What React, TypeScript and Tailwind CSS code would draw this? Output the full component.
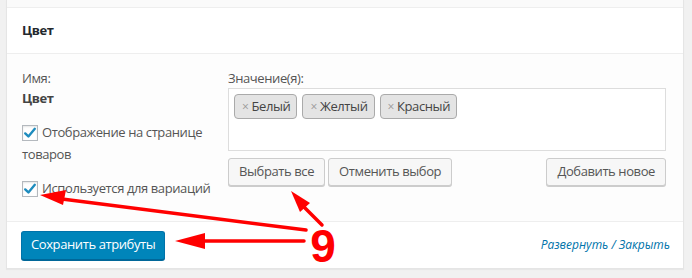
import React from "react";

const font = { fontFamily: '"Open Sans", "Noto Sans", Arial, sans-serif' };

function Check() {
  return (
    <span className="inline-flex h-[16px] w-[16px] shrink-0 items-center justify-center border border-[#b4b9be] bg-white shadow-[inset_0_1px_2px_rgba(0,0,0,0.1)]">
      <svg width="14" height="14" viewBox="0 0 14 14">
        <path d="M2.2 7.4 L5.4 10.4 L11.8 2.8" fill="none" stroke="#1e8cbe" strokeWidth="2.4" strokeLinecap="round" strokeLinejoin="round" />
      </svg>
    </span>
  );
}

function Tag({ label }: { label: string }) {
  return (
    <span className="inline-flex h-[25px] items-center rounded-[4px] border border-[#aaa] bg-[#e4e4e4] pl-[7px] pr-[6px] text-[13px] text-[#444]">
      <span className="mr-[3px] text-[12px] text-[#999]">×</span>
      {label}
    </span>
  );
}

function Btn({ children }: { children: React.ReactNode }) {
  return (
    <button className="h-[28px] rounded-[3px] border border-[#ccc] bg-[#f7f7f7] px-[10px] text-[13px] tracking-[-0.4px] text-[#555] shadow-[0_1px_0_#ccc]">
      {children}
    </button>
  );
}

export default function App() {
  return (
    <div className="relative h-[278px] w-[692px] overflow-hidden bg-[#f1f1f1] pl-[6px] pr-[8px] tracking-[-0.4px]" style={font}>
      <div className="flex h-[269px] flex-col border-x border-b border-[#e5e5e5] bg-white shadow-[0_1px_1px_rgba(0,0,0,0.04)]">
        <div className="h-[8px] border-b border-[#eee] bg-[#fafafa]" />
        <div className="flex h-[46px] items-center border-b border-[#eee] bg-white px-[15px] text-[13px] font-bold text-[#23282d]">
          Цвет
        </div>
        <div className="flex h-[168px] border-b border-[#eee] bg-[#fdfdfd] pl-[15px] pr-[17px] pt-[15px] text-[13px] text-[#555]">
          <div className="w-[206px]">
            <div className="leading-[18px]">Имя:</div>
            <div className="mt-[2px] font-bold leading-[18px] text-[#444]">Цвет</div>
            <div className="mt-[14px] flex items-start leading-[22px]">
              <div>
                <span className="mr-[4px] inline-flex align-[-3px]"><Check /></span>
                Отображение на странице товаров
              </div>
            </div>
            <div className="mt-[12px] leading-[22px]">
              <span className="mr-[4px] inline-flex align-[-3px]"><Check /></span>
              Используется для вариаций
            </div>
          </div>
          <div className="flex flex-1 flex-col">
            <div className="leading-[18px]">Значение(я):</div>
            <div className="mt-[1px] flex h-[63px] items-start gap-[5px] border border-[#ddd] bg-white p-[5px]">
              <Tag label="Белый" />
              <Tag label="Желтый" />
              <Tag label="Красный" />
            </div>
            <div className="mt-[7px] flex gap-[3px]">
              <Btn>Выбрать все</Btn>
              <Btn>Отменить выбор</Btn>
              <div className="flex-1" />
              <Btn>Добавить новое</Btn>
            </div>
          </div>
        </div>
        <div className="flex flex-1 items-center justify-between pl-[14px] pr-[13px]">
          <button className="h-[29px] rounded-[3px] border border-[#0073aa] border-b-[#006799] bg-[#0085ba] px-[9px] text-[13px] tracking-[-0.4px] text-white shadow-[0_1px_0_#006799]">
            Сохранить атрибуты
          </button>
          <span className="text-[12px] italic tracking-normal text-[#0073aa]">Развернуть / Закрыть</span>
        </div>
      </div>
      <svg className="pointer-events-none absolute left-0 top-0" width="692" height="278" viewBox="0 0 692 278">
        <g stroke="#ff0000" strokeWidth="3.5" strokeLinecap="round" fill="none">
          <line x1="306" y1="230" x2="62" y2="199" />
          <line x1="322" y1="225" x2="300" y2="203" />
          <line x1="304" y1="241" x2="200" y2="241" />
        </g>
        <g fill="#ff0000">
          <polygon points="40,195 66,190 63,205" />
          <polygon points="291,191 310,203 300,212" />
          <polygon points="175,241 205,233 205,249" />
        </g>
        <text x="323" y="262" textAnchor="middle" fill="#ff0000" fontSize="46" fontWeight="bold" style={{ fontFamily: '"Liberation Sans Narrow", "Liberation Sans", Arial, sans-serif', letterSpacing: 0 }}>
          9
        </text>
      </svg>
    </div>
  );
}
